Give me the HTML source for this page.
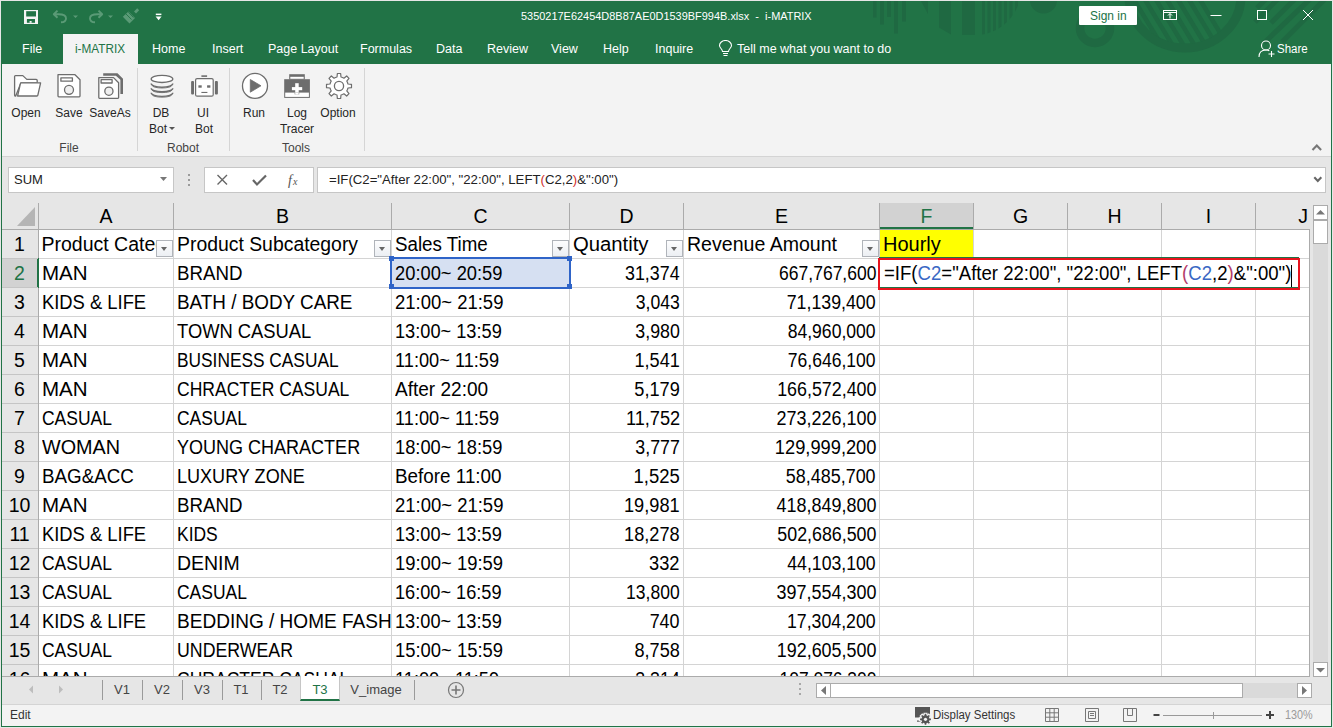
<!DOCTYPE html><html><head><meta charset="utf-8"><style>
*{margin:0;padding:0;box-sizing:border-box}
html,body{width:1333px;height:728px;overflow:hidden;background:#fff}
body{position:relative;font-family:"Liberation Sans",sans-serif;color:#000}
.ab{position:absolute}
.t{position:absolute;white-space:nowrap}
.tab{position:absolute;top:34px;height:30px;line-height:30px;color:#fff;font-size:12.5px}
.rl{position:absolute;font-size:12px;color:#262626;white-space:nowrap;text-align:center}
.gl{position:absolute;font-size:12px;color:#444;white-space:nowrap}
.cell{position:absolute;font-size:19.5px;line-height:29px;white-space:nowrap;overflow:hidden}
.hl{position:absolute;font-size:19.5px;white-space:nowrap;text-align:center;line-height:26px;top:203px}
.fb{position:absolute;width:17px;height:17px;border:1px solid #b0b4ba;background:linear-gradient(#fdfdfe,#eceff3)}
.fb:after{content:"";position:absolute;left:4px;top:6px;border-left:3.5px solid transparent;border-right:3.5px solid transparent;border-top:4px solid #666}
</style></head><body>

<div class="ab" style="left:0;top:0;width:1333px;height:728px;background:#e6e6e6"></div>
<div class="ab" style="left:1px;top:1px;width:1331px;height:63px;background:#217346"></div>
<svg class="ab" style="left:850px;top:1px" width="482" height="63" viewBox="850 0 482 63">
<defs><clipPath id="cb"><circle cx="975" cy="-12" r="46"/></clipPath>
<clipPath id="cs"><ellipse cx="1185" cy="-5" rx="52" ry="48"/></clipPath>
<clipPath id="ct"><path d="M1245 0 H1331 V63 H1245 Z"/></clipPath></defs>
<g fill="#1f6942">
<rect x="873" y="0" width="3.5" height="16.5"/><rect x="880" y="0" width="4" height="23.5"/><rect x="887" y="0" width="4" height="16"/><rect x="894" y="0" width="4" height="32.5"/><rect x="902" y="0" width="4" height="20.5"/>
<path d="M921 0 H928 V13 Z"/>
<path d="M939 0 H951 V33.5 L939 26.4 Z"/><rect x="962" y="0" width="13" height="33.8"/><g clip-path="url(#cb)"><rect x="982" y="0" width="3" height="34"/><rect x="987.5" y="0" width="3" height="34"/><rect x="993" y="0" width="3" height="34"/><rect x="998.5" y="0" width="3" height="34"/><rect x="1004" y="0" width="3" height="34"/><rect x="1009.5" y="0" width="3" height="34"/><rect x="1015" y="0" width="3" height="34"/><rect x="1020" y="0" width="3" height="34"/></g>
<circle cx="1043.5" cy="-1" r="13.5"/>
</g>
<g fill="none" stroke="#1f6942">
<circle cx="1095" cy="27" r="15" stroke-width="8.5"/>
<ellipse cx="1185" cy="-5" rx="56" ry="52" stroke-width="9"/>
<g clip-path="url(#cs)" stroke-width="4.5"><path d="M1122 -3 L1154 50"/><path d="M1133 -3 L1165 50"/><path d="M1144 -3 L1176 50"/><path d="M1155 -3 L1187 50"/><path d="M1166 -3 L1198 50"/><path d="M1177 -3 L1209 50"/><path d="M1188 -3 L1220 50"/><path d="M1199 -3 L1231 50"/></g>
<g clip-path="url(#ct)" stroke-width="5"><path d="M1266 -2 L1257 7"/><path d="M1278 -2 L1255 21"/><path d="M1295 -2 L1271 22"/><path d="M1310 -2 L1264 42"/><path d="M1325 -2 L1282 41"/></g>
</g>
</svg>
<svg class="ab" style="left:24px;top:10px" width="14" height="14" viewBox="24 10 14 14">
<rect x="24" y="10" width="14" height="14" fill="#f4f4f4"/>
<rect x="26.2" y="11.2" width="9.8" height="5.3" fill="#217346"/>
<rect x="26.9" y="19" width="8.1" height="3.8" fill="#217346"/>
<rect x="29.6" y="21" width="2" height="1.8" fill="#f4f4f4"/>
</svg>
<svg class="ab" style="left:45px;top:5px" width="120" height="25" viewBox="45 5 120 25">
<g fill="none" stroke="#5a9a76" stroke-width="1.9" stroke-linejoin="round" stroke-linecap="butt">
<path d="M57.5 10.6 L53.8 14.2 L57.5 17.8 M54 14.2 H58.5 Q66 14.2 66 18.2 Q66 22.3 61 22.3"/>
<path d="M98.5 10.6 L102.2 14.2 L98.5 17.8 M102 14.2 H97.5 Q90 14.2 90 18.2 Q90 22.3 95 22.3"/>
</g>
<path d="M73 15.4 H78 L75.5 18 Z M108 15.4 H113 L110.5 18 Z" fill="#5a9a76"/>
<path d="M122.8 16.8 L128.5 11.5 L135 18 L129.5 23.6 Z" fill="#5a9a76"/>
<path d="M126 14 L131.5 19.5 M128.4 12.3 L133.6 17.5" stroke="#217346" stroke-width="0.9"/>
<path d="M134 11.5 L137.2 8.3 L139.2 10.3 L136 13.5 Z" fill="#5a9a76"/>
<rect x="155.8" y="13.6" width="5.6" height="1.5" fill="#fff"/>
<path d="M155.6 16.4 H161.6 L158.6 20.2 Z" fill="#fff"/>
</svg>
<div class="t" style="left:521px;top:8px;font-size:11.8px;color:#fff;line-height:17px;transform:scaleX(0.928);transform-origin:left">5350217E62454D8B87AE0D1539BF994B.xlsx&nbsp; - &nbsp;i-MATRIX</div>
<div class="ab" style="left:1079px;top:6px;width:58px;height:19px;background:#fff;border-radius:1px"></div>
<div class="t" style="left:1090px;top:7px;font-size:13px;color:#217346;line-height:17px;transform:scaleX(0.92);transform-origin:left">Sign in</div>
<svg class="ab" style="left:1160px;top:5px" width="160" height="20" viewBox="0 0 160 20">
<g fill="none" stroke="#fff" stroke-width="1">
<rect x="3.5" y="5.5" width="13" height="9"/><path d="M3.5 7.5h13 M10 13.5v-5 M8 10.5l2-2 2 2"/>
<path d="M50.5 10.5h11"/>
<rect x="97.5" y="5.5" width="9" height="9"/>
<path d="M143 5 L153 15 M153 5 L143 15"/>
</g></svg>
<div class="ab" style="left:63px;top:34px;width:75px;height:31px;background:#f3f3f3"></div>
<div class="tab" style="left:22px;color:#fff">File</div>
<div class="tab" style="left:75px;color:#217346;transform:scaleX(0.94);transform-origin:left">i-MATRIX</div>
<div class="tab" style="left:152px;color:#fff">Home</div>
<div class="tab" style="left:212px;color:#fff">Insert</div>
<div class="tab" style="left:268px;color:#fff">Page Layout</div>
<div class="tab" style="left:360px;color:#fff">Formulas</div>
<div class="tab" style="left:436px;color:#fff">Data</div>
<div class="tab" style="left:487px;color:#fff">Review</div>
<div class="tab" style="left:551px;color:#fff">View</div>
<div class="tab" style="left:603px;color:#fff">Help</div>
<div class="tab" style="left:655px;color:#fff">Inquire</div>
<svg class="ab" style="left:718px;top:40px" width="15" height="17" viewBox="0 0 15 17"><g fill="none" stroke="#fff" stroke-width="1.1">
<path d="M4.5 11.5 C4.5 9 1.5 8 1.5 5.5 A6 5 0 0 1 13.5 5.5 C13.5 8 10.5 9 10.5 11.5 Z M5 13.5h5 M5.5 15.5h4"/></g></svg>
<div class="tab" style="left:737px">Tell me what you want to do</div>
<svg class="ab" style="left:1258px;top:40px" width="18" height="18" viewBox="0 0 18 18"><g fill="none" stroke="#fff" stroke-width="1.1">
<circle cx="8" cy="5.5" r="4.5"/><path d="M1 17 C1 12 4 10 8 10 C9.5 10 10.5 10.3 11.3 10.8 M13.5 11v6 M10.5 14h6"/></g></svg>
<div class="tab" style="left:1277px;transform:scaleX(0.92);transform-origin:left">Share</div>
<div class="ab" style="left:1px;top:64px;width:1331px;height:93px;background:#f3f3f3;border-bottom:1px solid #d4d4d4"></div>
<div class="ab" style="left:137px;top:68px;width:1px;height:83px;background:#d5d5d5"></div>
<div class="ab" style="left:229px;top:68px;width:1px;height:83px;background:#d5d5d5"></div>
<div class="ab" style="left:364px;top:68px;width:1px;height:83px;background:#d5d5d5"></div>
<svg class="ab" style="left:10px;top:70px" width="120" height="32" viewBox="10 70 120 32">
<g stroke="#6d6d6d" stroke-width="1.3" stroke-linejoin="round" fill="#fff">
<path d="M15.6 96.2 Q14.6 96.2 14.6 95.2 V76.5 Q14.6 75.6 15.5 75.6 H22.8 L26.8 79.4 H36.2 Q37.2 79.4 37.2 80.4 V82.8 H21 Z"/>
<path d="M17.6 96 L20.4 83.6 Q20.6 82.8 21.4 82.8 H40.6 L37.8 95.4 Q37.6 96 37 96 Z"/>
<path d="M58 74.7 H75 L80 79.7 V96 Q80 96.8 79.2 96.8 H58.8 Q58 96.8 58 96 Z"/>
<rect x="60.9" y="77.8" width="11.5" height="3.4" fill="none"/>
<circle cx="69" cy="89.8" r="4.5" fill="#f0f0f0"/>
</g>
<path d="M103.2 73.2 H117.5 L123 78.7 V93.9 H120.4 V79.8 L115.9 75.7 H103.2 Z" fill="#6d6d6d"/>
<g stroke="#6d6d6d" stroke-width="1.3" stroke-linejoin="round" fill="#fff">
<path d="M98.8 77.6 H113.5 L118.6 82.7 V97.6 Q118.6 98.3 117.9 98.3 H99.5 Q98.8 98.3 98.8 97.6 Z"/>
<rect x="101.1" y="79.6" width="11" height="3.4" fill="none"/>
<circle cx="108.9" cy="91.2" r="4.1" fill="#f0f0f0"/>
</g>
</svg>
<svg class="ab" style="left:145px;top:70px" width="215" height="32" viewBox="145 70 215 32">
<g fill="none" stroke="#6d6d6d">
<ellipse cx="162" cy="78.9" rx="10.8" ry="3.6" fill="#fff" stroke-width="1.3"/>
<path d="M151.2 83.6 A10.8 3.6 0 0 0 172.8 83.6" stroke-width="1.4"/><path d="M152.2 85.4 A9.8 2.6 0 0 0 171.8 85.4" stroke-width="0.9"/><path d="M151.2 88.19999999999999 A10.8 3.6 0 0 0 172.8 88.19999999999999" stroke-width="1.4"/><path d="M152.2 90.0 A9.8 2.6 0 0 0 171.8 90.0" stroke-width="0.9"/><path d="M151.2 92.8 A10.8 3.6 0 0 0 172.8 92.8" stroke-width="1.4"/><path d="M152.2 94.60000000000001 A9.8 2.6 0 0 0 171.8 94.60000000000001" stroke-width="0.9"/>
<rect x="195.6" y="78.6" width="17.6" height="17.6" rx="1.5" fill="#fff" stroke-width="1.2"/>
<circle cx="255" cy="85.9" r="12.5" fill="#fff" stroke-width="1.3"/>
<path d="M335.48 77.50 L337.01 77.02 L337.36 73.51 L340.64 73.51 L340.99 77.02 L342.52 77.50 L343.94 78.24 L346.67 76.00 L349.00 78.33 L346.76 81.06 L347.50 82.48 L347.98 84.01 L351.49 84.36 L351.49 87.64 L347.98 87.99 L347.50 89.52 L346.76 90.94 L349.00 93.67 L346.67 96.00 L343.94 93.76 L342.52 94.50 L340.99 94.98 L340.64 98.49 L337.36 98.49 L337.01 94.98 L335.48 94.50 L334.06 93.76 L331.33 96.00 L329.00 93.67 L331.24 90.94 L330.50 89.52 L330.02 87.99 L326.51 87.64 L326.51 84.36 L330.02 84.01 L330.50 82.48 L331.24 81.06 L329.00 78.33 L331.33 76.00 L334.06 78.24 Z" fill="#fff" stroke-width="1.2" stroke-linejoin="round"/>
<circle cx="339" cy="86" r="4.6" stroke-width="1.3"/>
</g>
<g fill="#6d6d6d">
<rect x="201.4" y="75.3" width="5.7" height="1.6"/>
<rect x="191.1" y="81.1" width="2.9" height="13.5" rx="1"/><rect x="214.9" y="81.1" width="3" height="13.5" rx="1"/>
<rect x="198.4" y="85.3" width="3.3" height="2.4"/><rect x="207.1" y="85.3" width="3.3" height="2.4"/>
<rect x="201.4" y="91.9" width="6" height="1.1"/>
<path d="M250.3 79.5 L261 85.8 L250.3 92.2 Z" stroke="#6d6d6d" stroke-width="0.8" stroke-linejoin="round"/>
</g>
</svg>
<svg class="ab" style="left:280px;top:70px" width="35" height="32" viewBox="280 70 35 32">
<path d="M289.2 74.2 H304.8 V79.5 H289.2 Z" fill="#6d6d6d"/><rect x="290.3" y="76.8" width="13.4" height="2" fill="#fff"/>
<rect x="284.2" y="79.2" width="25.7" height="18.7" fill="#6d6d6d"/>
<rect x="285.2" y="92.6" width="23.7" height="4.3" fill="#fff"/>
<rect x="295.2" y="83.2" width="3.5" height="11.4" fill="#fff"/><rect x="291.9" y="87.1" width="10.3" height="3.1" fill="#fff"/>
<rect x="294.7" y="92.6" width="4.5" height="1.8" fill="#6d6d6d"/><rect x="295.2" y="92.6" width="3.5" height="2" fill="#fff"/>
</svg>
<div class="rl" style="left:-14px;width:80px;top:105px;line-height:16px">Open</div>
<div class="rl" style="left:29px;width:80px;top:105px;line-height:16px">Save</div>
<div class="rl" style="left:70px;width:80px;top:105px;line-height:16px">SaveAs</div>
<div class="rl" style="left:121px;width:80px;top:105px;line-height:16px">DB</div>
<div class="rl" style="left:118px;width:80px;top:121px;line-height:16px">Bot</div>
<div class="rl" style="left:163px;width:80px;top:105px;line-height:16px">UI</div>
<div class="rl" style="left:164px;width:80px;top:121px;line-height:16px">Bot</div>
<div class="rl" style="left:214px;width:80px;top:105px;line-height:16px">Run</div>
<div class="rl" style="left:257px;width:80px;top:105px;line-height:16px">Log</div>
<div class="rl" style="left:257px;width:80px;top:121px;line-height:16px">Tracer</div>
<div class="rl" style="left:298px;width:80px;top:105px;line-height:16px">Option</div>
<svg class="ab" style="left:169px;top:127px" width="7" height="4"><path d="M0 0h6l-3 3z" fill="#555"/></svg>
<div class="rl" style="left:29px;width:80px;top:140px;line-height:16px;color:#444">File</div>
<div class="rl" style="left:143px;width:80px;top:140px;line-height:16px;color:#444">Robot</div>
<div class="rl" style="left:256px;width:80px;top:140px;line-height:16px;color:#444">Tools</div>
<svg class="ab" style="left:1311px;top:143px" width="12" height="9"><path d="M1.5 7 L5.8 2.6 L10.1 7" fill="none" stroke="#777" stroke-width="2.1"/></svg>
<div class="ab" style="left:1px;top:157px;width:1331px;height:46px;background:#e6e6e6"></div>
<div class="ab" style="left:8px;top:167px;width:166px;height:26px;background:#fff;border:1px solid #c6c6c6"></div>
<div class="t" style="left:14px;top:172px;font-size:13px;line-height:16px;color:#222">SUM</div>
<svg class="ab" style="left:160px;top:177px" width="8" height="5"><path d="M0 0h7l-3.5 4z" fill="#777"/></svg>
<svg class="ab" style="left:187px;top:174px" width="4" height="12"><g fill="#9a9a9a"><rect x="1" y="0" width="2" height="2"/><rect x="1" y="5" width="2" height="2"/><rect x="1" y="10" width="2" height="2"/></g></svg>
<div class="ab" style="left:204px;top:167px;width:110px;height:26px;background:#fff;border:1px solid #c6c6c6"></div>
<svg class="ab" style="left:214px;top:172px" width="95" height="16" viewBox="0 0 95 16">
<path d="M3.5 3 L13 12.5 M13 3 L3.5 12.5" stroke="#666" stroke-width="1.4" fill="none"/>
<path d="M39 8 L43 12.5 L52 3.5" stroke="#666" stroke-width="2.2" fill="none"/>
<text x="74" y="13" font-family="Liberation Serif" font-style="italic" font-size="14" fill="#555">f</text><text x="79" y="13" font-family="Liberation Serif" font-style="italic" font-size="10" fill="#555">x</text>
</svg>
<div class="ab" style="left:317px;top:167px;width:1009px;height:26px;background:#fff;border:1px solid #c6c6c6"></div>
<div class="t" style="left:329px;top:172px;font-size:13.2px;line-height:16px;color:#222">=IF(C2="After 22:00", "22:00", LEFT<span style="color:#d0312d">(</span>C2,2<span style="color:#d0312d">)</span>&amp;":00")</div>
<svg class="ab" style="left:1313px;top:176px" width="10" height="7"><path d="M1.3 1.3 L4.8 5 L8.3 1.3" fill="none" stroke="#666" stroke-width="2.1"/></svg>
<div class="ab" style="left:1px;top:203px;width:1308px;height:26px;background:#e6e6e6"></div>
<svg class="ab" style="left:17px;top:207px" width="19" height="20"><path d="M18 0 V19 H0 Z" fill="#b5b5b5"/></svg>
<div class="ab" style="left:880px;top:203px;width:93px;height:26px;background:#d2d2d2;border-bottom:2px solid #217346"></div>
<div class="hl" style="left:39px;width:134px;color:#000">A</div>
<div class="hl" style="left:174px;width:217px;color:#000">B</div>
<div class="hl" style="left:392px;width:177px;color:#000">C</div>
<div class="hl" style="left:570px;width:113px;color:#000">D</div>
<div class="hl" style="left:684px;width:195px;color:#000">E</div>
<div class="hl" style="left:880px;width:93px;color:#217346">F</div>
<div class="hl" style="left:974px;width:93px;color:#000">G</div>
<div class="hl" style="left:1068px;width:93px;color:#000">H</div>
<div class="hl" style="left:1162px;width:93px;color:#000">I</div>
<div class="hl" style="left:1256px;width:94px;color:#000">J</div>
<div class="ab" style="left:38px;top:203px;width:1px;height:26px;background:#ababab"></div>
<div class="ab" style="left:173px;top:203px;width:1px;height:26px;background:#ababab"></div>
<div class="ab" style="left:391px;top:203px;width:1px;height:26px;background:#ababab"></div>
<div class="ab" style="left:569px;top:203px;width:1px;height:26px;background:#ababab"></div>
<div class="ab" style="left:683px;top:203px;width:1px;height:26px;background:#ababab"></div>
<div class="ab" style="left:879px;top:203px;width:1px;height:26px;background:#ababab"></div>
<div class="ab" style="left:973px;top:203px;width:1px;height:26px;background:#ababab"></div>
<div class="ab" style="left:1067px;top:203px;width:1px;height:26px;background:#ababab"></div>
<div class="ab" style="left:1161px;top:203px;width:1px;height:26px;background:#ababab"></div>
<div class="ab" style="left:1255px;top:203px;width:1px;height:26px;background:#ababab"></div>
<div class="ab" style="left:1px;top:229px;width:1308px;height:1px;background:#ababab"></div>
<div class="ab" style="left:1px;top:230px;width:37px;height:447px;background:#e6e6e6"></div>
<div class="ab" style="left:1px;top:259px;width:37px;height:28px;background:#d2d2d2"></div>
<div class="ab" style="left:38px;top:203px;width:1px;height:474px;background:#ababab"></div>
<div class="ab" style="left:37px;top:258px;width:2px;height:30px;background:#217346"></div>
<div class="ab" style="left:1px;top:258px;width:37px;height:1px;background:#c5c5c5"></div>
<div class="cell" style="left:1px;width:37px;top:230px;text-align:center;color:#000">1</div>
<div class="ab" style="left:1px;top:287px;width:37px;height:1px;background:#c5c5c5"></div>
<div class="cell" style="left:1px;width:37px;top:259px;text-align:center;color:#217346">2</div>
<div class="ab" style="left:1px;top:316px;width:37px;height:1px;background:#c5c5c5"></div>
<div class="cell" style="left:1px;width:37px;top:288px;text-align:center;color:#000">3</div>
<div class="ab" style="left:1px;top:345px;width:37px;height:1px;background:#c5c5c5"></div>
<div class="cell" style="left:1px;width:37px;top:317px;text-align:center;color:#000">4</div>
<div class="ab" style="left:1px;top:374px;width:37px;height:1px;background:#c5c5c5"></div>
<div class="cell" style="left:1px;width:37px;top:346px;text-align:center;color:#000">5</div>
<div class="ab" style="left:1px;top:403px;width:37px;height:1px;background:#c5c5c5"></div>
<div class="cell" style="left:1px;width:37px;top:375px;text-align:center;color:#000">6</div>
<div class="ab" style="left:1px;top:432px;width:37px;height:1px;background:#c5c5c5"></div>
<div class="cell" style="left:1px;width:37px;top:404px;text-align:center;color:#000">7</div>
<div class="ab" style="left:1px;top:461px;width:37px;height:1px;background:#c5c5c5"></div>
<div class="cell" style="left:1px;width:37px;top:433px;text-align:center;color:#000">8</div>
<div class="ab" style="left:1px;top:490px;width:37px;height:1px;background:#c5c5c5"></div>
<div class="cell" style="left:1px;width:37px;top:462px;text-align:center;color:#000">9</div>
<div class="ab" style="left:1px;top:519px;width:37px;height:1px;background:#c5c5c5"></div>
<div class="cell" style="left:1px;width:37px;top:491px;text-align:center;color:#000">10</div>
<div class="ab" style="left:1px;top:548px;width:37px;height:1px;background:#c5c5c5"></div>
<div class="cell" style="left:1px;width:37px;top:520px;text-align:center;color:#000">11</div>
<div class="ab" style="left:1px;top:577px;width:37px;height:1px;background:#c5c5c5"></div>
<div class="cell" style="left:1px;width:37px;top:549px;text-align:center;color:#000">12</div>
<div class="ab" style="left:1px;top:606px;width:37px;height:1px;background:#c5c5c5"></div>
<div class="cell" style="left:1px;width:37px;top:578px;text-align:center;color:#000">13</div>
<div class="ab" style="left:1px;top:635px;width:37px;height:1px;background:#c5c5c5"></div>
<div class="cell" style="left:1px;width:37px;top:607px;text-align:center;color:#000">14</div>
<div class="ab" style="left:1px;top:664px;width:37px;height:1px;background:#c5c5c5"></div>
<div class="cell" style="left:1px;width:37px;top:636px;text-align:center;color:#000">15</div>
<div class="ab" style="left:1px;top:693px;width:37px;height:1px;background:#c5c5c5"></div>
<div class="cell" style="left:1px;width:37px;top:665px;text-align:center;color:#000">16</div>
<div class="ab" style="left:39px;top:230px;width:1270px;height:446px;background:#fff"></div>
<div class="ab" style="left:879px;top:230px;width:94px;height:27px;background:#ffff00"></div>
<div class="ab" style="left:392px;top:259px;width:177px;height:28px;background:#d6e0f2"></div>
<div class="ab" style="left:39px;top:258px;width:1270px;height:1px;background:#d4d4d4"></div>
<div class="ab" style="left:39px;top:287px;width:1270px;height:1px;background:#d4d4d4"></div>
<div class="ab" style="left:39px;top:316px;width:1270px;height:1px;background:#d4d4d4"></div>
<div class="ab" style="left:39px;top:345px;width:1270px;height:1px;background:#d4d4d4"></div>
<div class="ab" style="left:39px;top:374px;width:1270px;height:1px;background:#d4d4d4"></div>
<div class="ab" style="left:39px;top:403px;width:1270px;height:1px;background:#d4d4d4"></div>
<div class="ab" style="left:39px;top:432px;width:1270px;height:1px;background:#d4d4d4"></div>
<div class="ab" style="left:39px;top:461px;width:1270px;height:1px;background:#d4d4d4"></div>
<div class="ab" style="left:39px;top:490px;width:1270px;height:1px;background:#d4d4d4"></div>
<div class="ab" style="left:39px;top:519px;width:1270px;height:1px;background:#d4d4d4"></div>
<div class="ab" style="left:39px;top:548px;width:1270px;height:1px;background:#d4d4d4"></div>
<div class="ab" style="left:39px;top:577px;width:1270px;height:1px;background:#d4d4d4"></div>
<div class="ab" style="left:39px;top:606px;width:1270px;height:1px;background:#d4d4d4"></div>
<div class="ab" style="left:39px;top:635px;width:1270px;height:1px;background:#d4d4d4"></div>
<div class="ab" style="left:39px;top:664px;width:1270px;height:1px;background:#d4d4d4"></div>
<div class="ab" style="left:173px;top:230px;width:1px;height:446px;background:#d4d4d4"></div>
<div class="ab" style="left:391px;top:230px;width:1px;height:446px;background:#d4d4d4"></div>
<div class="ab" style="left:569px;top:230px;width:1px;height:446px;background:#d4d4d4"></div>
<div class="ab" style="left:683px;top:230px;width:1px;height:446px;background:#d4d4d4"></div>
<div class="ab" style="left:879px;top:230px;width:1px;height:446px;background:#d4d4d4"></div>
<div class="ab" style="left:973px;top:230px;width:1px;height:446px;background:#d4d4d4"></div>
<div class="ab" style="left:1067px;top:230px;width:1px;height:446px;background:#d4d4d4"></div>
<div class="ab" style="left:1161px;top:230px;width:1px;height:446px;background:#d4d4d4"></div>
<div class="ab" style="left:1255px;top:230px;width:1px;height:446px;background:#d4d4d4"></div>
<div class="cell" style="left:39px;top:230px;width:117px;height:28px;padding-left:2.5px"><span style="display:inline-block;transform:scaleX(1.0);transform-origin:left">Product Category</span></div>
<div class="cell" style="left:174px;top:230px;width:217px;height:28px;padding-left:2.5px"><span style="display:inline-block;transform:scaleX(0.9941);transform-origin:left">Product Subcategory</span></div>
<div class="cell" style="left:392px;top:230px;width:177px;height:28px;padding-left:2.5px"><span style="display:inline-block;transform:scaleX(0.9619);transform-origin:left">Sales Time</span></div>
<div class="cell" style="left:570px;top:230px;width:113px;height:28px;padding-left:2.5px"><span style="display:inline-block;transform:scaleX(1.0397);transform-origin:left">Quantity</span></div>
<div class="cell" style="left:684px;top:230px;width:195px;height:28px;padding-left:2.5px"><span style="display:inline-block;transform:scaleX(1.0028);transform-origin:left">Revenue Amount</span></div>
<div class="cell" style="left:880px;top:230px;width:93px;height:28px;padding-left:2.5px"><span style="display:inline-block;transform:scaleX(1.025);transform-origin:left">Hourly</span></div>
<div class="cell" style="left:39px;top:259px;width:134px;height:28px;padding-left:2.5px"><span style="display:inline-block;transform:scaleX(1.0532);transform-origin:left">MAN</span></div>
<div class="cell" style="left:174px;top:259px;width:217px;height:28px;padding-left:2.5px"><span style="display:inline-block;transform:scaleX(0.9586);transform-origin:left">BRAND</span></div>
<div class="cell" style="left:392px;top:259px;width:177px;height:28px;padding-left:2.5px"><span style="display:inline-block;transform:scaleX(0.9395);transform-origin:left">20:00~ 20:59</span></div>
<div class="cell" style="left:570px;top:259px;width:113px;height:28px;text-align:right;padding-right:3px"><span style="display:inline-block;transform:scaleX(0.9164);transform-origin:right">31,374</span></div>
<div class="cell" style="left:684px;top:259px;width:195px;height:28px;text-align:right;padding-right:3px"><span style="display:inline-block;transform:scaleX(0.8979);transform-origin:right">667,767,600</span></div>
<div class="cell" style="left:39px;top:288px;width:134px;height:28px;padding-left:2.5px"><span style="display:inline-block;transform:scaleX(0.942);transform-origin:left">KIDS &amp; LIFE</span></div>
<div class="cell" style="left:174px;top:288px;width:217px;height:28px;padding-left:2.5px"><span style="display:inline-block;transform:scaleX(0.9676);transform-origin:left">BATH / BODY CARE</span></div>
<div class="cell" style="left:392px;top:288px;width:177px;height:28px;padding-left:2.5px"><span style="display:inline-block;transform:scaleX(0.9478);transform-origin:left">21:00~ 21:59</span></div>
<div class="cell" style="left:570px;top:288px;width:113px;height:28px;text-align:right;padding-right:3px"><span style="display:inline-block;transform:scaleX(0.9032);transform-origin:right">3,043</span></div>
<div class="cell" style="left:684px;top:288px;width:195px;height:28px;text-align:right;padding-right:3px"><span style="display:inline-block;transform:scaleX(0.9107);transform-origin:right">71,139,400</span></div>
<div class="cell" style="left:39px;top:317px;width:134px;height:28px;padding-left:2.5px"><span style="display:inline-block;transform:scaleX(1.0532);transform-origin:left">MAN</span></div>
<div class="cell" style="left:174px;top:317px;width:217px;height:28px;padding-left:2.5px"><span style="display:inline-block;transform:scaleX(0.9413);transform-origin:left">TOWN CASUAL</span></div>
<div class="cell" style="left:392px;top:317px;width:177px;height:28px;padding-left:2.5px"><span style="display:inline-block;transform:scaleX(0.9335);transform-origin:left">13:00~ 13:59</span></div>
<div class="cell" style="left:570px;top:317px;width:113px;height:28px;text-align:right;padding-right:3px"><span style="display:inline-block;transform:scaleX(0.912);transform-origin:right">3,980</span></div>
<div class="cell" style="left:684px;top:317px;width:195px;height:28px;text-align:right;padding-right:3px"><span style="display:inline-block;transform:scaleX(0.9009);transform-origin:right">84,960,000</span></div>
<div class="cell" style="left:39px;top:346px;width:134px;height:28px;padding-left:2.5px"><span style="display:inline-block;transform:scaleX(1.0532);transform-origin:left">MAN</span></div>
<div class="cell" style="left:174px;top:346px;width:217px;height:28px;padding-left:2.5px"><span style="display:inline-block;transform:scaleX(0.8875);transform-origin:left">BUSINESS CASUAL</span></div>
<div class="cell" style="left:392px;top:346px;width:177px;height:28px;padding-left:2.5px"><span style="display:inline-block;transform:scaleX(0.9336);transform-origin:left">11:00~ 11:59</span></div>
<div class="cell" style="left:570px;top:346px;width:113px;height:28px;text-align:right;padding-right:3px"><span style="display:inline-block;transform:scaleX(0.9287);transform-origin:right">1,541</span></div>
<div class="cell" style="left:684px;top:346px;width:195px;height:28px;text-align:right;padding-right:3px"><span style="display:inline-block;transform:scaleX(0.8997);transform-origin:right">76,646,100</span></div>
<div class="cell" style="left:39px;top:375px;width:134px;height:28px;padding-left:2.5px"><span style="display:inline-block;transform:scaleX(1.0532);transform-origin:left">MAN</span></div>
<div class="cell" style="left:174px;top:375px;width:217px;height:28px;padding-left:2.5px"><span style="display:inline-block;transform:scaleX(0.8985);transform-origin:left">CHRACTER CASUAL</span></div>
<div class="cell" style="left:392px;top:375px;width:177px;height:28px;padding-left:2.5px"><span style="display:inline-block;transform:scaleX(0.9761);transform-origin:left">After 22:00</span></div>
<div class="cell" style="left:570px;top:375px;width:113px;height:28px;text-align:right;padding-right:3px"><span style="display:inline-block;transform:scaleX(0.933);transform-origin:right">5,179</span></div>
<div class="cell" style="left:684px;top:375px;width:195px;height:28px;text-align:right;padding-right:3px"><span style="display:inline-block;transform:scaleX(0.9158);transform-origin:right">166,572,400</span></div>
<div class="cell" style="left:39px;top:404px;width:134px;height:28px;padding-left:2.5px"><span style="display:inline-block;transform:scaleX(0.8962);transform-origin:left">CASUAL</span></div>
<div class="cell" style="left:174px;top:404px;width:217px;height:28px;padding-left:2.5px"><span style="display:inline-block;transform:scaleX(0.8962);transform-origin:left">CASUAL</span></div>
<div class="cell" style="left:392px;top:404px;width:177px;height:28px;padding-left:2.5px"><span style="display:inline-block;transform:scaleX(0.9336);transform-origin:left">11:00~ 11:59</span></div>
<div class="cell" style="left:570px;top:404px;width:113px;height:28px;text-align:right;padding-right:3px"><span style="display:inline-block;transform:scaleX(0.9327);transform-origin:right">11,752</span></div>
<div class="cell" style="left:684px;top:404px;width:195px;height:28px;text-align:right;padding-right:3px"><span style="display:inline-block;transform:scaleX(0.9219);transform-origin:right">273,226,100</span></div>
<div class="cell" style="left:39px;top:433px;width:134px;height:28px;padding-left:2.5px"><span style="display:inline-block;transform:scaleX(1.0159);transform-origin:left">WOMAN</span></div>
<div class="cell" style="left:174px;top:433px;width:217px;height:28px;padding-left:2.5px"><span style="display:inline-block;transform:scaleX(0.9237);transform-origin:left">YOUNG CHARACTER</span></div>
<div class="cell" style="left:392px;top:433px;width:177px;height:28px;padding-left:2.5px"><span style="display:inline-block;transform:scaleX(0.938);transform-origin:left">18:00~ 18:59</span></div>
<div class="cell" style="left:570px;top:433px;width:113px;height:28px;text-align:right;padding-right:3px"><span style="display:inline-block;transform:scaleX(0.9106);transform-origin:right">3,777</span></div>
<div class="cell" style="left:684px;top:433px;width:195px;height:28px;text-align:right;padding-right:3px"><span style="display:inline-block;transform:scaleX(0.9371);transform-origin:right">129,999,200</span></div>
<div class="cell" style="left:39px;top:462px;width:134px;height:28px;padding-left:2.5px"><span style="display:inline-block;transform:scaleX(0.9633);transform-origin:left">BAG&amp;ACC</span></div>
<div class="cell" style="left:174px;top:462px;width:217px;height:28px;padding-left:2.5px"><span style="display:inline-block;transform:scaleX(0.9259);transform-origin:left">LUXURY ZONE</span></div>
<div class="cell" style="left:392px;top:462px;width:177px;height:28px;padding-left:2.5px"><span style="display:inline-block;transform:scaleX(0.9669);transform-origin:left">Before 11:00</span></div>
<div class="cell" style="left:570px;top:462px;width:113px;height:28px;text-align:right;padding-right:3px"><span style="display:inline-block;transform:scaleX(0.947);transform-origin:right">1,525</span></div>
<div class="cell" style="left:684px;top:462px;width:195px;height:28px;text-align:right;padding-right:3px"><span style="display:inline-block;transform:scaleX(0.9202);transform-origin:right">58,485,700</span></div>
<div class="cell" style="left:39px;top:491px;width:134px;height:28px;padding-left:2.5px"><span style="display:inline-block;transform:scaleX(1.0532);transform-origin:left">MAN</span></div>
<div class="cell" style="left:174px;top:491px;width:217px;height:28px;padding-left:2.5px"><span style="display:inline-block;transform:scaleX(0.9586);transform-origin:left">BRAND</span></div>
<div class="cell" style="left:392px;top:491px;width:177px;height:28px;padding-left:2.5px"><span style="display:inline-block;transform:scaleX(0.9478);transform-origin:left">21:00~ 21:59</span></div>
<div class="cell" style="left:570px;top:491px;width:113px;height:28px;text-align:right;padding-right:3px"><span style="display:inline-block;transform:scaleX(0.9335);transform-origin:right">19,981</span></div>
<div class="cell" style="left:684px;top:491px;width:195px;height:28px;text-align:right;padding-right:3px"><span style="display:inline-block;transform:scaleX(0.9211);transform-origin:right">418,849,800</span></div>
<div class="cell" style="left:39px;top:520px;width:134px;height:28px;padding-left:2.5px"><span style="display:inline-block;transform:scaleX(0.942);transform-origin:left">KIDS &amp; LIFE</span></div>
<div class="cell" style="left:174px;top:520px;width:217px;height:28px;padding-left:2.5px"><span style="display:inline-block;transform:scaleX(0.8949);transform-origin:left">KIDS</span></div>
<div class="cell" style="left:392px;top:520px;width:177px;height:28px;padding-left:2.5px"><span style="display:inline-block;transform:scaleX(0.9335);transform-origin:left">13:00~ 13:59</span></div>
<div class="cell" style="left:570px;top:520px;width:113px;height:28px;text-align:right;padding-right:3px"><span style="display:inline-block;transform:scaleX(0.9312);transform-origin:right">18,278</span></div>
<div class="cell" style="left:684px;top:520px;width:195px;height:28px;text-align:right;padding-right:3px"><span style="display:inline-block;transform:scaleX(0.9139);transform-origin:right">502,686,500</span></div>
<div class="cell" style="left:39px;top:549px;width:134px;height:28px;padding-left:2.5px"><span style="display:inline-block;transform:scaleX(0.8962);transform-origin:left">CASUAL</span></div>
<div class="cell" style="left:174px;top:549px;width:217px;height:28px;padding-left:2.5px"><span style="display:inline-block;transform:scaleX(0.9986);transform-origin:left">DENIM</span></div>
<div class="cell" style="left:392px;top:549px;width:177px;height:28px;padding-left:2.5px"><span style="display:inline-block;transform:scaleX(0.9444);transform-origin:left">19:00~ 19:59</span></div>
<div class="cell" style="left:570px;top:549px;width:113px;height:28px;text-align:right;padding-right:3px"><span style="display:inline-block;transform:scaleX(0.9371);transform-origin:right">332</span></div>
<div class="cell" style="left:684px;top:549px;width:195px;height:28px;text-align:right;padding-right:3px"><span style="display:inline-block;transform:scaleX(0.9047);transform-origin:right">44,103,100</span></div>
<div class="cell" style="left:39px;top:578px;width:134px;height:28px;padding-left:2.5px"><span style="display:inline-block;transform:scaleX(0.8962);transform-origin:left">CASUAL</span></div>
<div class="cell" style="left:174px;top:578px;width:217px;height:28px;padding-left:2.5px"><span style="display:inline-block;transform:scaleX(0.8962);transform-origin:left">CASUAL</span></div>
<div class="cell" style="left:392px;top:578px;width:177px;height:28px;padding-left:2.5px"><span style="display:inline-block;transform:scaleX(0.9315);transform-origin:left">16:00~ 16:59</span></div>
<div class="cell" style="left:570px;top:578px;width:113px;height:28px;text-align:right;padding-right:3px"><span style="display:inline-block;transform:scaleX(0.8979);transform-origin:right">13,800</span></div>
<div class="cell" style="left:684px;top:578px;width:195px;height:28px;text-align:right;padding-right:3px"><span style="display:inline-block;transform:scaleX(0.9208);transform-origin:right">397,554,300</span></div>
<div class="cell" style="left:39px;top:607px;width:134px;height:28px;padding-left:2.5px"><span style="display:inline-block;transform:scaleX(0.942);transform-origin:left">KIDS &amp; LIFE</span></div>
<div class="cell" style="left:174px;top:607px;width:217px;height:28px;padding-left:2.5px"><span style="display:inline-block;transform:scaleX(0.9762);transform-origin:left">BEDDING / HOME FASHION</span></div>
<div class="cell" style="left:392px;top:607px;width:177px;height:28px;padding-left:2.5px"><span style="display:inline-block;transform:scaleX(0.9335);transform-origin:left">13:00~ 13:59</span></div>
<div class="cell" style="left:570px;top:607px;width:113px;height:28px;text-align:right;padding-right:3px"><span style="display:inline-block;transform:scaleX(0.919);transform-origin:right">740</span></div>
<div class="cell" style="left:684px;top:607px;width:195px;height:28px;text-align:right;padding-right:3px"><span style="display:inline-block;transform:scaleX(0.9078);transform-origin:right">17,304,200</span></div>
<div class="cell" style="left:39px;top:636px;width:134px;height:28px;padding-left:2.5px"><span style="display:inline-block;transform:scaleX(0.8962);transform-origin:left">CASUAL</span></div>
<div class="cell" style="left:174px;top:636px;width:217px;height:28px;padding-left:2.5px"><span style="display:inline-block;transform:scaleX(0.9101);transform-origin:left">UNDERWEAR</span></div>
<div class="cell" style="left:392px;top:636px;width:177px;height:28px;padding-left:2.5px"><span style="display:inline-block;transform:scaleX(0.9444);transform-origin:left">15:00~ 15:59</span></div>
<div class="cell" style="left:570px;top:636px;width:113px;height:28px;text-align:right;padding-right:3px"><span style="display:inline-block;transform:scaleX(0.9283);transform-origin:right">8,758</span></div>
<div class="cell" style="left:684px;top:636px;width:195px;height:28px;text-align:right;padding-right:3px"><span style="display:inline-block;transform:scaleX(0.9193);transform-origin:right">192,605,500</span></div>
<div class="cell" style="left:39px;top:665px;width:134px;height:28px;padding-left:2.5px"><span style="display:inline-block;transform:scaleX(1.0532);transform-origin:left">MAN</span></div>
<div class="cell" style="left:174px;top:665px;width:217px;height:28px;padding-left:2.5px"><span style="display:inline-block;transform:scaleX(0.8985);transform-origin:left">CHRACTER CASUAL</span></div>
<div class="cell" style="left:392px;top:665px;width:177px;height:28px;padding-left:2.5px"><span style="display:inline-block;transform:scaleX(0.9336);transform-origin:left">11:00~ 11:59</span></div>
<div class="cell" style="left:570px;top:665px;width:113px;height:28px;text-align:right;padding-right:3px"><span style="display:inline-block;transform:scaleX(0.9132);transform-origin:right">3,314</span></div>
<div class="cell" style="left:684px;top:665px;width:195px;height:28px;text-align:right;padding-right:3px"><span style="display:inline-block;transform:scaleX(0.8938);transform-origin:right">107,076,300</span></div>
<div class="fb" style="left:156px;top:240px"></div>
<div class="fb" style="left:374px;top:240px"></div>
<div class="fb" style="left:552px;top:240px"></div>
<div class="fb" style="left:666px;top:240px"></div>
<div class="fb" style="left:862px;top:240px"></div>
<div class="ab" style="left:390px;top:257px;width:181px;height:32px;border:2px solid #2f64c8"></div>
<div class="ab" style="left:389px;top:256px;width:5px;height:5px;background:#2f64c8"></div>
<div class="ab" style="left:567px;top:256px;width:5px;height:5px;background:#2f64c8"></div>
<div class="ab" style="left:389px;top:284px;width:5px;height:5px;background:#2f64c8"></div>
<div class="ab" style="left:567px;top:284px;width:5px;height:5px;background:#2f64c8"></div>
<div class="ab" style="left:879px;top:257px;width:420px;height:31px;background:#fff;border-top:1px solid #217346;border-bottom:1px solid #217346"></div>
<div class="t" style="left:884px;top:258px;font-size:19.5px;line-height:30px;transform:scaleX(0.953);transform-origin:left">=IF(<span style="color:#3a68c4">C2</span>="After 22:00", "22:00", LEFT<span style="color:#b33c6a">(</span><span style="color:#3a68c4">C2</span>,2<span style="color:#b33c6a">)</span>&amp;":00")</div>
<div class="ab" style="left:1291px;top:265px;width:1px;height:22px;background:#000"></div>
<div class="ab" style="left:878px;top:258px;width:422px;height:32px;border:2px solid #e8141e"></div>
<div class="ab" style="left:1309px;top:229px;width:1px;height:448px;background:#ababab"></div>
<div class="ab" style="left:1px;top:676px;width:1309px;height:1px;background:#ababab"></div>
<div class="ab" style="left:1310px;top:203px;width:22px;height:474px;background:#e6e6e6"></div>
<div class="ab" style="left:1313px;top:205px;width:15px;height:471px;background:#dadada"></div>
<div class="ab" style="left:1313px;top:205px;width:15px;height:15px;background:#fff;border:1px solid #ababab"></div>
<svg class="ab" style="left:1316px;top:210px" width="9" height="5"><path d="M0 4.5h9L4.5 0z" fill="#777"/></svg>
<div class="ab" style="left:1313px;top:220px;width:15px;height:24px;background:#fff;border:1px solid #ababab"></div>
<div class="ab" style="left:1313px;top:662px;width:15px;height:15px;background:#fff;border:1px solid #ababab"></div>
<svg class="ab" style="left:1316px;top:668px" width="9" height="5"><path d="M0 0h9L4.5 4.5z" fill="#777"/></svg>
<div class="ab" style="left:1px;top:677px;width:1331px;height:27px;background:#e6e6e6"></div>
<svg class="ab" style="left:26px;top:684px" width="40" height="12"><path d="M7 1.5 L3 5.5 L7 9.5Z M33 1.5 L37 5.5 L33 9.5Z" fill="#bdbdbd"/></svg>
<div class="ab" style="left:102px;top:680px;width:1px;height:20px;background:#9a9a9a"></div>
<div class="ab" style="left:142px;top:680px;width:1px;height:20px;background:#9a9a9a"></div>
<div class="ab" style="left:182px;top:680px;width:1px;height:20px;background:#9a9a9a"></div>
<div class="ab" style="left:222px;top:680px;width:1px;height:20px;background:#9a9a9a"></div>
<div class="ab" style="left:261px;top:680px;width:1px;height:20px;background:#9a9a9a"></div>
<div class="ab" style="left:414px;top:680px;width:1px;height:20px;background:#9a9a9a"></div>
<div class="ab" style="left:300px;top:676px;width:40px;height:25px;background:#fff;border-left:1px solid #c6c6c6;border-right:1px solid #c6c6c6;border-bottom:2px solid #217346"></div>
<div class="t" style="left:82px;width:80px;text-align:center;top:681px;line-height:18px;font-size:13px;color:#444">V1</div>
<div class="t" style="left:122px;width:80px;text-align:center;top:681px;line-height:18px;font-size:13px;color:#444">V2</div>
<div class="t" style="left:162px;width:80px;text-align:center;top:681px;line-height:18px;font-size:13px;color:#444">V3</div>
<div class="t" style="left:201px;width:80px;text-align:center;top:681px;line-height:18px;font-size:13px;color:#444">T1</div>
<div class="t" style="left:240px;width:80px;text-align:center;top:681px;line-height:18px;font-size:13px;color:#444">T2</div>
<div class="t" style="left:280px;width:80px;text-align:center;top:681px;line-height:18px;font-size:13px;color:#217346">T3</div>
<div class="t" style="left:336px;width:80px;text-align:center;top:681px;line-height:18px;font-size:13px;color:#444">V_image</div>
<svg class="ab" style="left:447px;top:681px" width="18" height="18"><circle cx="9" cy="9" r="7.5" fill="none" stroke="#777" stroke-width="1.2"/><path d="M9 4.5v9 M4.5 9h9" stroke="#777" stroke-width="1.6"/></svg>
<svg class="ab" style="left:798px;top:683px" width="4" height="14"><g fill="#a8a8a8"><rect x="1" y="0" width="2" height="2"/><rect x="1" y="5" width="2" height="2"/><rect x="1" y="10" width="2" height="2"/></g></svg>
<div class="ab" style="left:816px;top:683px;width:496px;height:15px;background:#dadada"></div>
<div class="ab" style="left:816px;top:683px;width:15px;height:15px;background:#fff;border:1px solid #ababab"></div>
<svg class="ab" style="left:821px;top:686px" width="6" height="9"><path d="M5 0v9L0 4.5z" fill="#777"/></svg>
<div class="ab" style="left:830px;top:683px;width:413px;height:15px;background:#fff;border:1px solid #ababab"></div>
<div class="ab" style="left:1297px;top:683px;width:15px;height:15px;background:#fff;border:1px solid #ababab"></div>
<svg class="ab" style="left:1302px;top:686px" width="6" height="9"><path d="M0 0v9L5 4.5z" fill="#777"/></svg>
<div class="ab" style="left:1px;top:704px;width:1331px;height:22px;background:#f3f3f3;border-top:1px solid #d4d4d4"></div>
<div class="t" style="left:10px;top:707px;font-size:12px;line-height:16px;color:#333">Edit</div>
<svg class="ab" style="left:910px;top:704px" width="24" height="22" viewBox="910 704 24 22">
<rect x="915" y="707" width="15" height="10.5" fill="#555"/><rect x="917" y="720.5" width="4" height="1.2" fill="#555"/>
<path d="M923.74 715.05 L924.08 714.93 L924.11 713.26 L926.89 713.26 L926.92 714.93 L927.26 715.05 L927.59 715.20 L928.79 714.04 L930.76 716.01 L929.60 717.21 L929.75 717.54 L929.87 717.88 L931.54 717.91 L931.54 720.69 L929.87 720.72 L929.75 721.06 L929.60 721.39 L930.76 722.59 L928.79 724.56 L927.59 723.40 L927.26 723.55 L926.92 723.67 L926.89 725.34 L924.11 725.34 L924.08 723.67 L923.74 723.55 L923.41 723.40 L922.21 724.56 L920.24 722.59 L921.40 721.39 L921.25 721.06 L921.13 720.72 L919.46 720.69 L919.46 717.91 L921.13 717.88 L921.25 717.54 L921.40 717.21 L920.24 716.01 L922.21 714.04 L923.41 715.20 Z" fill="#555" stroke="#f3f3f3" stroke-width="1.2"/>
<circle cx="925.5" cy="719.3" r="1.6" fill="#f3f3f3"/>
</svg>
<div class="t" style="left:933px;top:707px;font-size:12px;line-height:16px;color:#333;transform:scaleX(0.955);transform-origin:left">Display Settings</div>
<svg class="ab" style="left:1044px;top:707px" width="100" height="16" viewBox="0 0 100 16">
<g fill="none" stroke="#777" stroke-width="1">
<path d="M1.5 1.5h13v13h-13z M1.5 5.8h13 M1.5 10.2h13 M5.8 1.5v13 M10.2 1.5v13"/>
<path d="M41.5 1.5h13v13h-13z M44.5 4.5h7v7h-7z M46 6.5h4 M46 8.5h4"/>
<path d="M79.5 1.5h13v13h-13z M83.5 1.5v7h5v-7"/>
</g></svg>
<svg class="ab" style="left:1150px;top:709px" width="130" height="12"><path d="M3.5 6h6" stroke="#444" stroke-width="2"/><path d="M13 6.5h99" stroke="#999" stroke-width="1"/><path d="M63.5 3v7" stroke="#999"/><path d="M116 6h8 M120 2v8" stroke="#444" stroke-width="2"/></svg>
<div class="t" style="left:1285px;top:707px;font-size:12px;line-height:16px;color:#9a9a9a;transform:scaleX(0.9);transform-origin:left">130%</div>
<div class="ab" style="left:1px;top:64px;width:1px;height:663px;background:#217346"></div>
<div class="ab" style="left:1331px;top:64px;width:1px;height:663px;background:#217346"></div>
<div class="ab" style="left:1px;top:726px;width:1331px;height:1px;background:#217346"></div>
</body></html>
